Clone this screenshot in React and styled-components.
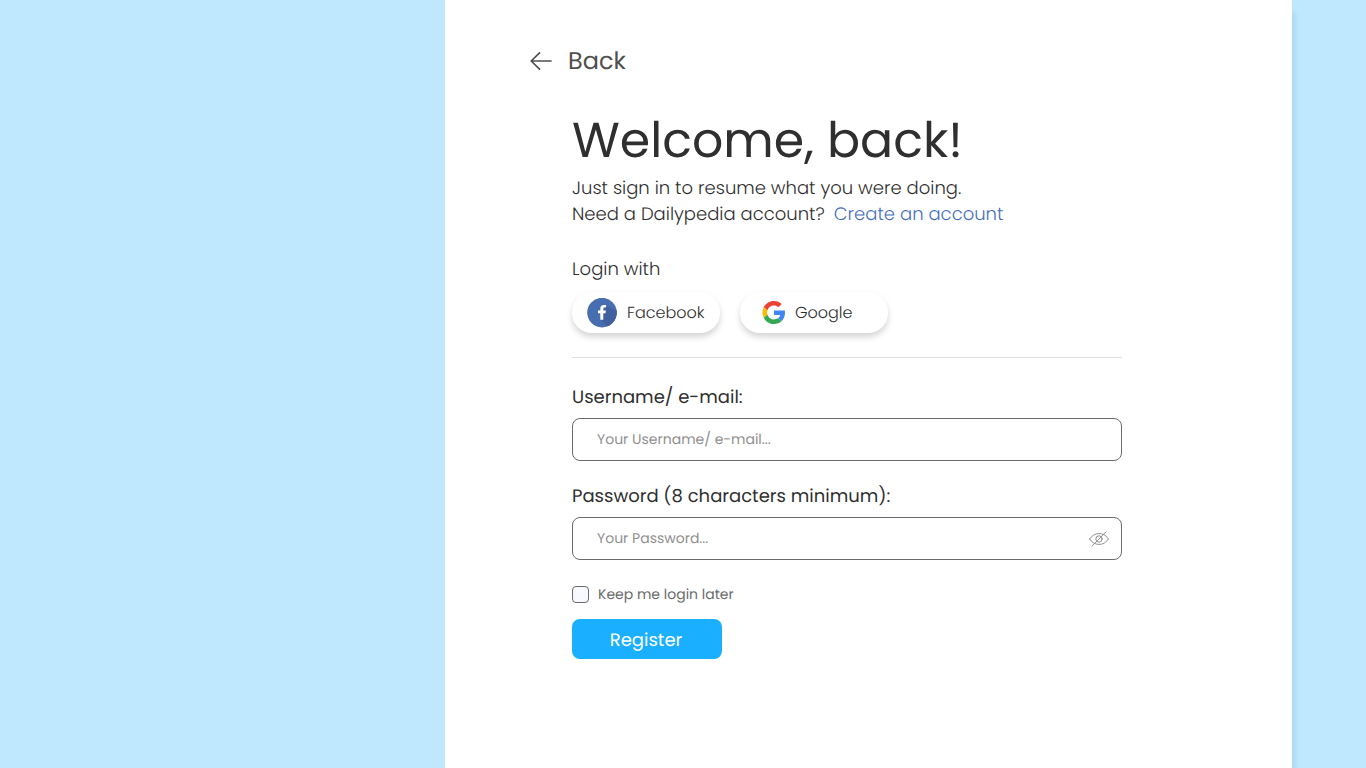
import React from "react";
import styled, { createGlobalStyle } from "styled-components";

const GlobalStyle = createGlobalStyle`
  *, *::before, *::after { box-sizing: border-box; }
  body {
    margin: 0;
    background: #bfe8ff;
    color: #2f2f2f;
    font-family: Poppins, Inter, "Open Sans", sans-serif;
    font-size: 18px;
    line-height: 26px;
    text-rendering: geometricPrecision;
  }
  button, input { font: inherit; color: inherit; text-rendering: inherit; }
`;

const Page = styled.div`
  display: grid;
  grid-template-columns: 445fr 847fr 74fr;
  min-height: 100vh;
`;

const Panel = styled.main`
  grid-column: 2;
  padding: 40px 85px;
  background: #fff;
  box-shadow: 4px 12px 4px rgba(0, 60, 110, 0.08);
`;

const BackLink = styled.a`
  display: inline-flex;
  align-items: center;
  gap: 15px;
  color: #4f4f4f;
  font-size: 24px;
  line-height: 44px;
  text-decoration: none;
`;

const Content = styled.div`
  max-width: 592px;
  margin-top: 23px;
  padding-left: 42px;
`;

const Title = styled.h1`
  margin: 0;
  font-size: 49px;
  font-weight: 400;
  line-height: 69px;
`;

const Text = styled.p`
  margin: 0;
  font-weight: 300;
`;

const AccountLink = styled.a`
  margin-left: 9px;
  color: #4671bd;
  text-decoration: none;
`;

const Socials = styled.section`
  margin-top: 29px;
  padding-bottom: 24px;
  border-bottom: 1px solid #e0e0e0;
`;

const SocialRow = styled.div`
  display: flex;
  flex-wrap: wrap;
  gap: 20px;
  margin-top: 9px;
`;

const SocialButton = styled.button`
  display: flex;
  align-items: center;
  gap: 10px;
  width: 148px;
  height: 41px;
  padding: 0 0 0 ${(p) => p.$inset}px;
  border: 0;
  border-radius: 20px;
  background: #fff;
  box-shadow: 0 4px 6px rgba(0, 0, 0, 0.17);
  font-size: 16px;
  font-weight: 300;
  cursor: pointer;
`;

const Form = styled.form`
  display: grid;
  gap: 23px;
  margin-top: 27px;
`;

const Field = styled.div`
  display: grid;
  gap: 7px;
`;

const InputBox = styled.div`
  display: flex;
  align-items: center;
  height: 43px;
  padding: 0 12px 0 24px;
  border: 1px solid #6b6b6b;
  border-radius: 8px;
`;

const Input = styled.input`
  flex: 1;
  min-width: 0;
  padding: 0 0 2px;
  border: 0;
  outline: 0;
  background: transparent;
  font-size: 14px;
  &::placeholder { color: #909090; opacity: 1; }
`;

const IconButton = styled.button`
  display: flex;
  padding: 0;
  border: 0;
  background: none;
  color: #909090;
  cursor: pointer;
`;

const Actions = styled.div`
  display: grid;
  justify-items: start;
  gap: 14px;
`;

const CheckLabel = styled.label`
  display: flex;
  align-items: center;
  gap: 9px;
  color: #6b6b6b;
  font-size: 14px;
  line-height: 22px;
`;

const Checkbox = styled.input`
  appearance: none;
  width: 17px;
  height: 17px;
  margin: 0;
  border: 1px solid #6b6b6b;
  border-radius: 4px;
  background: #f8f9ff;
  &:checked { background: #1aafff; }
`;

const SubmitButton = styled.button`
  width: 150px;
  height: 40px;
  padding: 3px 2px 0 0;
  border: 0;
  border-radius: 8px;
  background: #1aafff;
  color: #fff;
  cursor: pointer;
`;

const ArrowIcon = () => (
  <svg width="23" height="20" viewBox="0 1 23 20" fill="none" stroke="currentColor" strokeWidth="1.7" strokeLinecap="round" strokeLinejoin="round" aria-hidden="true">
    <path d="M21 10H1.500M9.500 1.900L1.200 10L9.500 18.100" />
  </svg>
);

const FacebookIcon = () => (
  <svg width="30" height="30" viewBox="0 0 30 30" aria-hidden="true">
    <defs>
      <clipPath id="fb-disc"><circle cx="15" cy="14.600" r="14.800" /></clipPath>
    </defs>
    <g clipPath="url(#fb-disc)">
      <path fill="#466eb0" d="M0 0h30v30H0z" />
      <path fill="#40609f" d="M18.500 8L30 12.500V30H22L13.500 21.800z" />
      <path fill="#fff" d="M13.300 21.800V15.200H11V12.400H13.300V10.800C13.300 8.300 14.600 7 16.800 7L19 7.100V9.600H17.600C16.600 9.600 16.300 10.100 16.300 11V12.400H18.900L18.500 15.200H16.300V21.800z" />
    </g>
  </svg>
);

const GoogleIcon = () => (
  <svg width="24" height="23" viewBox="-3 0 50 48" aria-hidden="true">
    <path fill="#EA4335" d="M24 9.500c3.540 0 6.710 1.220 9.210 3.600l6.850-6.850C35.900 2.380 30.470 0 24 0 14.620 0 6.510 5.380 2.560 13.220l7.980 6.190C12.430 13.720 17.740 9.500 24 9.500z" />
    <path fill="#4285F4" d="M46.980 24.550c0-1.570-.150-3.090-.380-4.550H24v9.020h12.940c-.580 2.960-2.260 5.480-4.780 7.180l7.730 6c4.510-4.180 7.090-10.360 7.090-17.650z" />
    <path fill="#FBBC05" d="M10.530 28.590c-.480-1.450-.760-2.990-.760-4.590s.270-3.140.760-4.590l-7.980-6.190C.920 16.460 0 20.120 0 24c0 3.880.920 7.540 2.560 10.780l7.970-6.190z" />
    <path fill="#34A853" d="M24 48c6.480 0 11.930-2.130 15.890-5.810l-7.730-6c-2.150 1.450-4.920 2.300-8.160 2.300-6.260 0-11.570-4.220-13.470-9.910l-7.980 6.190C6.510 42.620 14.620 48 24 48z" />
  </svg>
);

const EyeOffIcon = () => (
  <svg width="20" height="16" viewBox="0 0 20 16" fill="none" stroke="currentColor" strokeWidth="1" strokeLinecap="round" aria-hidden="true">
    <path d="M0.600 8C5 0.700 15 0.700 19.400 8C15 15.300 5 15.300 0.600 8z" />
    <circle cx="10" cy="8" r="3.200" />
    <path d="M17 0.800L3 15.200" />
  </svg>
);

export default function App() {
  const [visible, setVisible] = React.useState(false);
  return (
    <>
      <GlobalStyle />
      <Page>
        <Panel>
          <BackLink href="#back"><ArrowIcon />Back</BackLink>
          <Content>
            <Title>Welcome, back!</Title>
            <Text>Just sign in to resume what you were doing.</Text>
            <Text>
              Need a Dailypedia account?
              <AccountLink href="#create">Create an account</AccountLink>
            </Text>
            <Socials>
              <Text>Login with</Text>
              <SocialRow>
                <SocialButton type="button" $inset={15}><FacebookIcon />Facebook</SocialButton>
                <SocialButton type="button" $inset={21}><GoogleIcon />Google</SocialButton>
              </SocialRow>
            </Socials>
            <Form onSubmit={(e) => e.preventDefault()}>
              <Field>
                <label htmlFor="username">Username/ e-mail:</label>
                <InputBox>
                  <Input id="username" type="text" placeholder="Your Username/ e-mail..." />
                </InputBox>
              </Field>
              <Field>
                <label htmlFor="password">Password (8 characters minimum):</label>
                <InputBox>
                  <Input id="password" type={visible ? "text" : "password"} placeholder="Your Password..." />
                  <IconButton type="button" aria-label="Show password" onClick={() => setVisible(!visible)}>
                    <EyeOffIcon />
                  </IconButton>
                </InputBox>
              </Field>
              <Actions>
                <CheckLabel><Checkbox type="checkbox" />Keep me login later</CheckLabel>
                <SubmitButton type="submit">Register</SubmitButton>
              </Actions>
            </Form>
          </Content>
        </Panel>
      </Page>
    </>
  );
}
